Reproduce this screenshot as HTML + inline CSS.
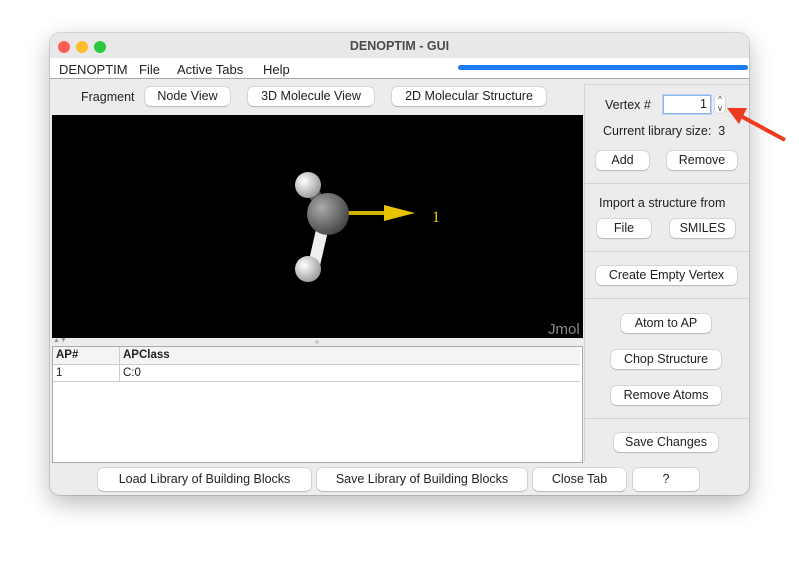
<!DOCTYPE html>
<html><head><style>
body{margin:0;width:799px;height:562px;background:#fff;font-family:"Liberation Sans",sans-serif;font-size:12.5px;color:#222;position:relative;overflow:hidden}
.a{position:absolute}
.win{left:50px;top:33px;width:699px;height:462px;background:#ececec;border-radius:10px;box-shadow:0 8px 24px rgba(0,0,0,.28),0 0 0 1px rgba(0,0,0,.12);overflow:hidden}
.btn{position:absolute;background:#fff;border-radius:5px;box-shadow:0 0 0 .5px rgba(0,0,0,.18),0 1px 1px rgba(0,0,0,.15);text-align:center;font-size:12.5px;line-height:19px;height:19px;color:#222}
.sep{position:absolute;left:585px;width:164px;height:1px;background:#d3d3d3}
.t{position:absolute;white-space:nowrap}
</style></head><body>
<div class="a win">
 <div class="a" style="left:0;top:0;width:699px;height:25px;background:#e8e8e8"></div>
 <div class="a" style="left:8px;top:8px;width:12px;height:12px;border-radius:6px;background:#fe5f57"></div>
 <div class="a" style="left:26px;top:8px;width:12px;height:12px;border-radius:6px;background:#febc2e"></div>
 <div class="a" style="left:44px;top:8px;width:12px;height:12px;border-radius:6px;background:#28c840"></div>
 <div class="t" style="left:0;width:699px;top:6px;text-align:center;font-weight:bold;color:#4a4a4a;font-size:12.5px">DENOPTIM - GUI</div>
 <div class="a" style="left:0;top:25px;width:699px;height:20px;background:#fff;border-bottom:1px solid #a8a8a8"></div>
</div>
<div class="t" style="left:59px;top:62px;font-size:13px">DENOPTIM</div>
<div class="t" style="left:139px;top:62px;font-size:13px">File</div>
<div class="t" style="left:177px;top:62px;font-size:13px">Active Tabs</div>
<div class="t" style="left:263px;top:62px;font-size:13px">Help</div>
<div class="a" style="left:458px;top:65px;width:290px;height:5px;border-radius:3px;background:#1a7cf0"></div>
<div class="a" style="left:585px;top:84px;width:164px;height:1px;background:#d3d3d3"></div>
<div class="a" style="left:584px;top:84px;width:1px;height:378px;background:#d3d3d3"></div>

<div class="t" style="left:81px;top:90px">Fragment</div>
<div class="btn" style="left:145px;top:87px;width:85px">Node View</div>
<div class="btn" style="left:248px;top:87px;width:126px">3D Molecule View</div>
<div class="btn" style="left:392px;top:87px;width:154px">2D Molecular Structure</div>

<div class="a" style="left:52px;top:115px;width:531px;height:223px;background:#000"></div>
<svg class="a" style="left:52px;top:115px" width="531" height="223">
 <defs>
  <radialGradient id="g" cx=".35" cy=".35" r=".7"><stop offset="0" stop-color="#aaa"/><stop offset="1" stop-color="#444"/></radialGradient>
  <radialGradient id="w" cx=".35" cy=".35" r=".7"><stop offset="0" stop-color="#fff"/><stop offset="1" stop-color="#999"/></radialGradient>
  <linearGradient id="b" x1="0" x2="1"><stop offset="0" stop-color="#ccc"/><stop offset=".45" stop-color="#fff"/><stop offset="1" stop-color="#888"/></linearGradient>
 </defs>
 <line x1="274" y1="98" x2="262" y2="150" stroke="#eee" stroke-width="12"/>
 <line x1="274" y1="98" x2="258" y2="72" stroke="#555" stroke-width="12"/>
 <circle cx="256" cy="70" r="13" fill="url(#w)"/>
 <circle cx="256" cy="154" r="13" fill="url(#w)"/>
 <rect x="290" y="96" width="45" height="4" fill="#d4b200"/>
 <polygon points="332,90 363,98 332,106" fill="#e8c400"/>
 <circle cx="276" cy="99" r="21" fill="url(#g)"/>
 <text x="380" y="107" font-family="Liberation Serif" font-size="16" fill="#e8d000">1</text>
 <text x="496" y="219" font-family="Liberation Sans" font-size="15" fill="#888">Jmol</text>
</svg>
<div class="t" style="left:53px;top:337px;font-size:7px;color:#999">▲▼</div>
<div class="a" style="left:315px;top:340px;width:4px;height:4px;border-radius:2px;background:#ccc"></div>

<div class="a" style="left:52px;top:346px;width:529px;height:115px;background:#fff;border:1px solid #aaa"></div>
<div class="a" style="left:53px;top:347px;width:527px;height:17px;background:#f4f4f4;border-bottom:1px solid #ccc"></div>
<div class="a" style="left:119px;top:347px;width:1px;height:35px;background:#ccc"></div>
<div class="t" style="left:56px;top:349px;font-size:11.5px;font-weight:bold">AP#</div>
<div class="t" style="left:123px;top:349px;font-size:11.5px;font-weight:bold">APClass</div>
<div class="a" style="left:53px;top:381px;width:527px;height:1px;background:#ccc"></div>
<div class="t" style="left:56px;top:367px;font-size:11.5px">1</div>
<div class="t" style="left:123px;top:367px;font-size:11.5px">C:0</div>

<div class="t" style="left:605px;top:98px">Vertex #</div>
<div class="a" style="left:663px;top:95px;width:46px;height:17px;background:#fff;border:1px solid #8ab4ee;box-shadow:0 0 0 1px #b9d4f7"></div>
<div class="t" style="left:700px;top:97px">1</div>
<div class="a" style="left:715px;top:95px;width:10px;height:18px;background:#fff;border-radius:4px;box-shadow:0 0 0 .5px #bbb;font-size:8px;line-height:9px;text-align:center">^<br>v</div>
<svg class="a" style="left:725px;top:100px" width="65" height="45"><line x1="60" y1="40" x2="12" y2="14" stroke="#f03a1f" stroke-width="4"/><polygon points="2,8 22,8 14,24" fill="#f03a1f"/></svg>
<div class="t" style="left:603px;top:124px">Current library size:&nbsp; 3</div>
<div class="btn" style="left:596px;top:151px;width:53px">Add</div>
<div class="btn" style="left:667px;top:151px;width:70px">Remove</div>
<div class="sep" style="top:183px"></div>
<div class="t" style="left:599px;top:196px">Import a structure from</div>
<div class="btn" style="left:597px;top:219px;width:54px">File</div>
<div class="btn" style="left:670px;top:219px;width:65px">SMILES</div>
<div class="sep" style="top:251px"></div>
<div class="btn" style="left:596px;top:266px;width:141px">Create Empty Vertex</div>
<div class="sep" style="top:298px"></div>
<div class="btn" style="left:621px;top:314px;width:90px">Atom to AP</div>
<div class="btn" style="left:611px;top:350px;width:110px">Chop Structure</div>
<div class="btn" style="left:611px;top:386px;width:110px">Remove Atoms</div>
<div class="sep" style="top:418px"></div>
<div class="btn" style="left:614px;top:433px;width:104px">Save Changes</div>

<div class="btn" style="left:98px;top:468px;width:213px;height:23px;line-height:23px">Load Library of Building Blocks</div>
<div class="btn" style="left:317px;top:468px;width:210px;height:23px;line-height:23px">Save Library of Building Blocks</div>
<div class="btn" style="left:533px;top:468px;width:93px;height:23px;line-height:23px">Close Tab</div>
<div class="btn" style="left:633px;top:468px;width:66px;height:23px;line-height:23px">?</div>
</body></html>
